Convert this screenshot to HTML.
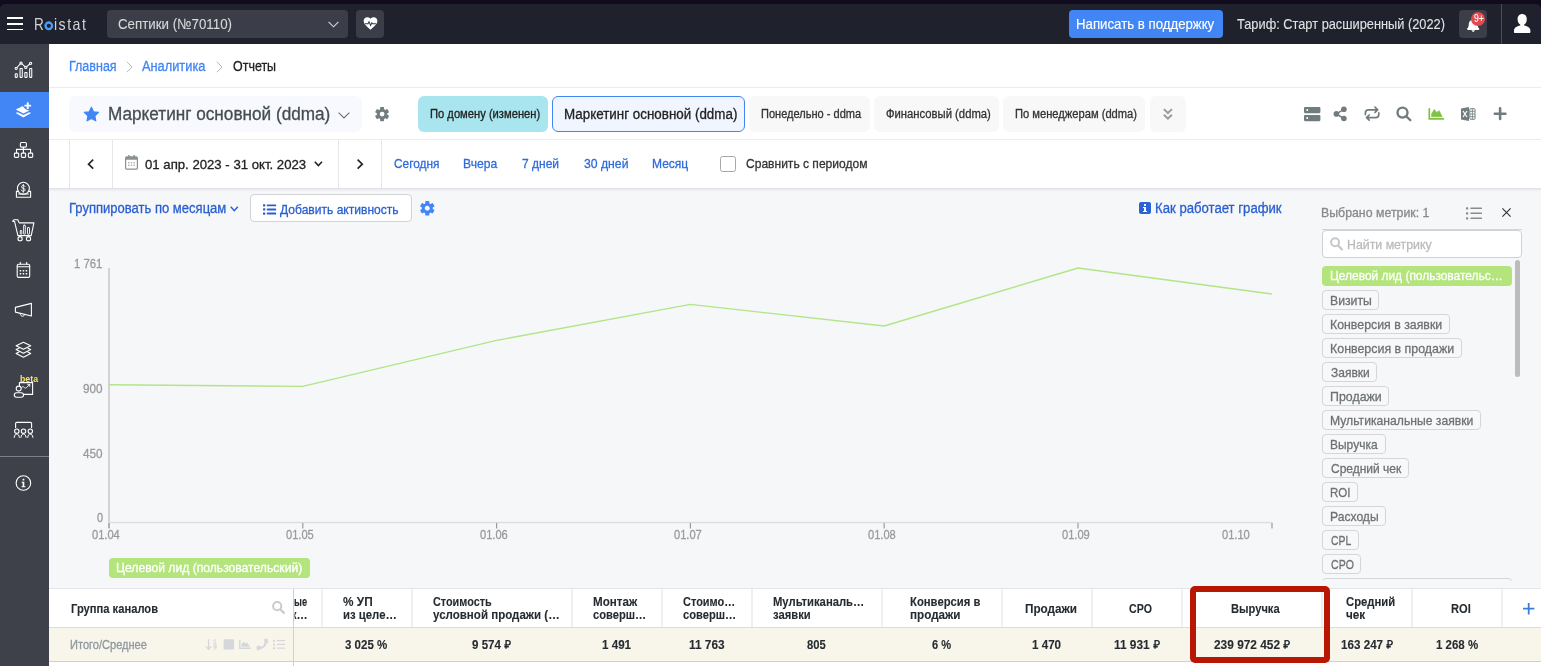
<!DOCTYPE html>
<html lang="ru">
<head>
<meta charset="utf-8">
<title>Roistat</title>
<style>
*{box-sizing:border-box;margin:0;padding:0}
html,body{width:1541px;height:666px;overflow:hidden;background:#fff;font-family:"Liberation Sans",sans-serif}
#page{position:relative;width:1541px;height:666px;overflow:hidden;background:#fff}
.a{position:absolute}
.t{position:absolute;white-space:pre;transform-origin:0 50%;font-family:"Liberation Sans",sans-serif;-webkit-text-stroke:.3px currentColor}
svg{position:absolute;overflow:visible}
.tag{position:absolute;left:1322px;height:20px;border:1px solid #d5d6d9;border-radius:4px;background:#f8f8f9}
.vs{position:absolute;top:589px;width:1.4px;height:38px;background:#eff0f1;margin-left:-.6px}
</style>
</head>
<body>
<div id="page">
<!-- top strip + header -->
<div class="a" style="left:0;top:0;width:1541px;height:10px;background:#100c1e"></div>
<div class="a" style="left:0;top:4px;width:1541px;height:40px;background:#1f212d;border-radius:5px 5px 0 0"></div>
<!-- hamburger -->
<div class="a" style="left:6.5px;top:17.3px;width:16px;height:1.4px;background:#fff"></div>
<div class="a" style="left:6.5px;top:23.2px;width:16px;height:1.4px;background:#fff"></div>
<div class="a" style="left:6.5px;top:28.8px;width:16px;height:1.4px;background:#fff"></div>
<!-- logo -->
<!-- project dropdown -->
<div class="a" style="left:107px;top:10px;width:241px;height:28px;background:#3b3e49;border-radius:4px"></div>
<svg style="left:327.700px;top:21px" width="11" height="7" viewBox="0 0 11 7"><path d="M.6.8 5.5 5.8 10.4.8" fill="none" stroke="#d8d8d8" stroke-width="1.1"/></svg>
<div class="a" style="left:356px;top:10px;width:28px;height:28px;background:#3b3e49;border-radius:4px"></div>
<svg style="left:362.600px;top:17.100px" width="15" height="12.800" viewBox="0 0 512 448"><path fill="#fff" d="M256 448l-30-28C96 302 16 236 16 140 16 66 72 12 144 12c42 0 82 20 112 52 30-32 70-52 112-52 72 0 128 54 128 128 0 96-80 162-210 280z"/><path fill="none" stroke="#3b3e49" stroke-width="36" d="M60 236h110l34-70 56 130 44-96 26 36h120"/></svg>
<!-- support button -->
<div class="a" style="left:1069px;top:10px;width:154px;height:28px;background:#4285f4;border-radius:4px"></div>
<!-- bell -->
<div class="a" style="left:1459px;top:10px;width:28px;height:28px;background:#3b3e49;border-radius:4px"></div>
<svg style="left:1466.6px;top:18.6px" width="12.4" height="12.8" viewBox="0 0 448 462"><path fill="#fff" d="M224 462c32 0 58-24 58-54H166c0 30 26 54 58 54zM440 340c-20-20-56-52-56-154 0-78-54-140-128-156V10c0-18-14-10-32-10s-32-8-32 10v20C118 46 64 108 64 186c0 102-36 134-56 154-6 6-8 14-8 22 0 16 12 32 32 32h384c20 0 32-16 32-32 0-8-2-16-8-22z"/></svg>
<div class="a" style="left:1471px;top:12px;width:14px;height:14px;border-radius:7px;background:#e5494d"></div>
<!-- divider + user -->
<div class="a" style="left:1501px;top:4px;width:1px;height:40px;background:#4a4d58"></div>
<svg style="left:1514px;top:14px" width="16.4" height="19" viewBox="0 0 164 190"><path fill="#fff" d="M82 0c28 0 46 22 46 52 0 22-10 44-26 54v10c36 8 62 24 62 50v14c0 6-4 10-10 10H10c-6 0-10-4-10-10v-14c0-26 26-42 62-50v-10C46 96 36 74 36 52 36 22 54 0 82 0z"/></svg>

<!-- sidebar -->
<div class="a" style="left:0;top:44px;width:49px;height:622px;background:#3e4149"></div>
<div class="a" style="left:0;top:92px;width:49px;height:36px;background:#4285f4"></div>
<div class="a" style="left:0;top:456px;width:49px;height:1px;background:#7d808a"></div>
<!--SIDEICONS_START--><svg style="left:0;top:0" width="60" height="666" viewBox="0 0 60 666" fill="none" stroke="#fff" stroke-width="1.100" stroke-linejoin="round" stroke-linecap="round">
<!-- 1 analytics -->
<g stroke-width="1.050"><rect x="15.250" y="73.650" width="2" height="3.700" rx=".3"/><rect x="20.050" y="68.550" width="2.200" height="8.800" rx=".3"/><rect x="24.850" y="72.450" width="2.200" height="4.900" rx=".3"/><rect x="29.650" y="68.550" width="2.100" height="8.800" rx=".3"/>
<path d="M17 67.500 20.300 63.800M21.900 63.800 25 66.700M26.700 66.700 29.800 64"/>
<circle cx="16.200" cy="68.300" r="1.100"/><circle cx="21" cy="63" r="1.100"/><circle cx="25.800" cy="67.400" r="1.100"/><circle cx="30.600" cy="63.300" r="1.100"/></g>
<!-- 2 layers plus (filled) -->
<g fill="#fff" stroke="none">
<path d="M15.7 109.5 22.9 106.1c1.2 2.6 3.4 4.2 6.6 4.5L23.4 113.5z"/>
<path d="M15.7 113.1 17.6 112.2 23.4 115.1 29.2 112.2 31.2 113.1 23.4 117.6z"/>
<rect x="26.8" y="102.2" width="1.9" height="6.8" rx=".5"/><rect x="24.35" y="104.65" width="6.8" height="1.9" rx=".5"/>
</g>
<!-- 3 sitemap -->
<rect x="20.4" y="142.5" width="6" height="4.6" rx="1"/>
<path d="M23.4 147.2V152.8M16.5 152.8V149.4H30.6V152.8"/>
<rect x="14.4" y="153.1" width="4.3" height="4.3" rx=".9"/><rect x="21.3" y="153.1" width="4.3" height="4.3" rx=".9"/><rect x="28.4" y="153.1" width="4.3" height="4.3" rx=".9"/>
<!-- 4 coin tray -->
<circle cx="23.4" cy="188.3" r="6"/>
<path d="M18.4 191.4H16.4V197.2H30.6V191.4H28.6M18.6 194H28.4" />
<path d="M25 186.6c-.3-.9-1-1.2-1.8-1.2-1 0-1.7.6-1.7 1.4 0 2 3.6 1 3.6 3 0 .9-.8 1.5-1.9 1.5-.9 0-1.7-.4-1.9-1.3M23.3 184.4v7.9" stroke-width=".9"/>
<!-- 5 cart -->
<path d="M12.6 221.3 14 219.7H17.8L19.2 222.9H33.9L31.2 235.6H17.9L14.6 221.6z" stroke-width="1.1"/>
<circle cx="20.1" cy="238.7" r="2.1" stroke-width="1.1"/><circle cx="28.5" cy="238.7" r="2.1" stroke-width="1.1"/>
<rect x="20.3" y="230.6" width="1.5" height="3.6" rx=".5" stroke-width=".9"/><rect x="23.6" y="225.2" width="1.7" height="9" rx=".5" stroke-width=".9"/><rect x="27.5" y="227.6" width="2" height="6.6" rx=".5" stroke-width=".9"/>
<!-- 6 calendar -->
<rect x="17.2" y="264.2" width="12.5" height="13.2" rx="1.4"/>
<path d="M17.2 266.7H29.7M20.3 262.4V264M26.7 262.4V264"/>
<g fill="#fff" stroke="none"><rect x="19.7" y="270" width="1.5" height="1.5"/><rect x="22.7" y="270" width="1.5" height="1.5"/><rect x="25.7" y="270" width="1.5" height="1.5"/><rect x="19.7" y="273" width="1.5" height="1.5"/><rect x="22.7" y="273" width="1.5" height="1.5"/><rect x="25.7" y="273" width="1.5" height="1.5"/></g>
<!-- 7 megaphone -->
<path d="M15.4 307.4 31.4 303.4V316L15.4 312.1z"/>
<path d="M20.2 313.4c0 1.8 1 2.8 2.3 2.8s2.2-.9 2.2-1.9" stroke-width="1"/>
<!-- 8 layers -->
<path d="M23.4 342.2 30.7 345.8 23.4 349.3 16.1 345.8z"/>
<path d="M18.9 348.2 16.1 349.6 23.4 353.2 30.7 349.6 27.9 348.2"/>
<path d="M18.9 352 16.1 353.5 23.4 357.2 30.7 353.5 27.9 352"/>
<!-- 9 presenter -->
<path d="M19.4 385.6V382.6H32.6V394.4H24.2"/>
<circle cx="18.7" cy="388.6" r="2.5"/>
<rect x="14.3" y="392.8" width="9.2" height="4.4" rx="2.2"/>
<path d="M21.6 387.6c1-1.2 1.8-1.2 2.6-.2s1.600 1 2.600-.2L29.600 384.600M27.800 384.400H29.800V386.400" stroke-width=".9"/>
<!-- 10 group -->
<path d="M15.6 427.600V423.600a1.200 1.200 0 0 1 1.200-1.200H30.400a1.200 1.200 0 0 1 1.200 1.200V427.600"/>
<circle cx="16.8" cy="431.200" r="2.200"/><circle cx="23.500" cy="431.200" r="2.200"/><circle cx="30.300" cy="431.200" r="2.200"/>
<path d="M14.200 437.400c.200-2.400 1.400-3.300 2.600-3.300s2.400.9 2.600 3.300M20.900 437.400c.200-2.400 1.400-3.300 2.600-3.300s2.400.9 2.600 3.300M27.700 437.400c.200-2.400 1.400-3.300 2.600-3.300s2.400.9 2.600 3.300" stroke-width="1"/>
<!-- info -->
<circle cx="23.400" cy="483" r="7.300" stroke-width="1.100"/>
<g fill="#fff" stroke="none"><rect x="22.600" y="478.800" width="1.700" height="1.700"/><path d="M21.600 481.700H24.300V486.200H25.400V487.200H21.500V486.200H22.600V482.700H21.600z"/></g>
</svg>
<!--SIDEICONS_END-->

<!-- breadcrumb row -->
<div class="a" style="left:49px;top:87px;width:1492px;height:1px;background:#ececec"></div>
<svg style="left:125.5px;top:60.5px" width="7" height="12" viewBox="0 0 7 12"><path d="M.8.8 6 6 .8 11.2" fill="none" stroke="#b9b9b9" stroke-width="1"/></svg>
<svg style="left:215.5px;top:60.5px" width="7" height="12" viewBox="0 0 7 12"><path d="M.8.8 6 6 .8 11.2" fill="none" stroke="#b9b9b9" stroke-width="1"/></svg>

<!-- title row -->
<div class="a" style="left:69px;top:96.400px;width:293px;height:35.600px;background:#f7f9fe;border-radius:7px"></div>
<svg style="left:82.600px;top:106.200px" width="16.800" height="16.200" viewBox="0 0 24 23"><path fill="#4285f4" stroke="#4285f4" stroke-width="1.6" stroke-linejoin="round" d="M12 1.6l3.1 6.6 7.1.9-5.2 5 1.3 7.1L12 17.7 5.7 21.2 7 14.1l-5.2-5 7.1-.9z"/></svg>
<svg style="left:337.5px;top:111.6px" width="12" height="7" viewBox="0 0 12 7"><path d="M.6.7 6 6 11.4.7" fill="none" stroke="#6b7375" stroke-width="1.1"/></svg>
<!--G1S--><svg style="left:373.95px;top:105.80px" width="16.2" height="16.2" viewBox="-8.10 -8.10 16.20 16.20"><g fill="#737e81"><circle r="5.25"/><rect x="-1.99" y="-7.10" width="3.98" height="4.26" rx=".7" transform="rotate(0)"/><rect x="-1.99" y="-7.10" width="3.98" height="4.26" rx=".7" transform="rotate(60)"/><rect x="-1.99" y="-7.10" width="3.98" height="4.26" rx=".7" transform="rotate(120)"/><rect x="-1.99" y="-7.10" width="3.98" height="4.26" rx=".7" transform="rotate(180)"/><rect x="-1.99" y="-7.10" width="3.98" height="4.26" rx=".7" transform="rotate(240)"/><rect x="-1.99" y="-7.10" width="3.98" height="4.26" rx=".7" transform="rotate(300)"/></g><circle r="2.40" fill="#fff"/></svg><!--G1E-->
<div class="a" style="left:418px;top:96px;width:130px;height:36px;background:#a9e5ee;border-radius:6px"></div>
<div class="a" style="left:552px;top:96px;width:193px;height:36px;background:#f0f5ff;border:1px solid #4285f4;border-radius:6px"></div>
<div class="a" style="left:749px;top:96px;width:121px;height:36px;background:#f8f8f8;border-radius:6px"></div>
<div class="a" style="left:874px;top:96px;width:125px;height:36px;background:#f8f8f8;border-radius:6px"></div>
<div class="a" style="left:1003px;top:96px;width:142px;height:36px;background:#f8f8f8;border-radius:6px"></div>
<div class="a" style="left:1150px;top:96px;width:36px;height:36px;background:#f8f8f8;border-radius:6px"></div>
<svg style="left:1162.8px;top:107.8px" width="9.8" height="12.4" viewBox="0 0 10 12.4"><path d="M.9 1 5 5 9.1 1M.9 6.8 5 10.8 9.1 6.8" fill="none" stroke="#979d9f" stroke-width="2"/></svg>
<!--TIS--><svg style="left:0;top:0" width="1541" height="140" viewBox="0 0 1541 140">
<g fill="#717c7f"><rect x="1304" y="107" width="16.400" height="6.200" rx="1.100"/><rect x="1304" y="115" width="16.400" height="6.200" rx="1.100"/></g>
<circle cx="1307.200" cy="110.100" r="1" fill="#fff"/><circle cx="1307.200" cy="118.100" r="1" fill="#fff"/>
<g fill="#717c7f"><circle cx="1343.900" cy="109.300" r="2.800"/><circle cx="1336.400" cy="113.900" r="2.800"/><circle cx="1343.900" cy="118.500" r="2.800"/></g>
<path d="M1343.900 109.300 1336.400 113.900 1343.900 118.500" fill="none" stroke="#717c7f" stroke-width="1.500"/>
<g fill="none" stroke="#717c7f" stroke-width="1.700" stroke-linecap="round" stroke-linejoin="round">
<path d="M1365.400 114.600V113a3.200 3.200 0 0 1 3.200-3.200H1377.200M1375 107.200 1377.700 109.800 1375 112.400"/>
<path d="M1378.800 112.800V114.400a3.200 3.200 0 0 1-3.200 3.200H1367M1369.200 115 1366.500 117.600 1369.200 120.200"/>
</g>
<circle cx="1402.500" cy="112.600" r="5" fill="none" stroke="#717c7f" stroke-width="2.400"/>
<path d="M1406.400 116.500 1410.300 120.200" stroke="#717c7f" stroke-width="2.300" stroke-linecap="round"/>
<path d="M1429.300 108.800V118.900H1443.400" fill="none" stroke="#7dc242" stroke-width="1.700" stroke-linecap="round" stroke-linejoin="round"/>
<path d="M1431.600 116.800V113.800L1434.300 109.400 1436.700 112.400 1439.200 110.700 1442.200 116.800z" fill="#7dc242" stroke="#7dc242" stroke-width=".6" stroke-linejoin="round"/>
<path d="M1461 108.500 1469 107V120.900L1461 119.500z" fill="#717c7f"/>
<path d="M1463 111 1467 117M1467 111 1463 117" stroke="#fff" stroke-width="1.200"/>
<rect x="1469.800" y="108.700" width="5.200" height="10.600" rx=".8" fill="#fff" stroke="#717c7f" stroke-width="1"/>
<path d="M1470 111.300H1475M1470 114H1475M1470 116.700H1475M1472.400 109V119" stroke="#717c7f" stroke-width=".8"/>
<path d="M1500.100 108.400V119M1494.800 113.700H1505.400" stroke="#717c7f" stroke-width="2.600" stroke-linecap="round"/>
</svg><!--TIE-->
<div class="a" style="left:49px;top:139px;width:1492px;height:1px;background:#ececec"></div>

<!-- date row -->
<div class="a" style="left:69px;top:140px;width:1px;height:48px;background:#e6e6e6"></div>
<div class="a" style="left:112px;top:140px;width:1px;height:48px;background:#e6e6e6"></div>
<div class="a" style="left:338px;top:140px;width:1px;height:48px;background:#e6e6e6"></div>
<div class="a" style="left:381px;top:140px;width:1px;height:48px;background:#e6e6e6"></div>
<svg style="left:87px;top:158.800px" width="8" height="11" viewBox="0 0 8 11"><path d="M6.200.7 1.500 5.200 6.200 9.700" fill="none" stroke="#1d2226" stroke-width="1.600"/></svg>
<svg style="left:356.400px;top:158.800px" width="8" height="11" viewBox="0 0 8 11"><path d="M1.600.7 6.300 5.200 1.600 9.700" fill="none" stroke="#1d2226" stroke-width="1.600"/></svg>
<svg style="left:314px;top:160.5px" width="9" height="6" viewBox="0 0 9 6"><path d="M.8.8 4.4 4.6 8 .8" fill="none" stroke="#1d2226" stroke-width="1.5"/></svg>
<!-- calendar icon -->
<svg style="left:125px;top:155.4px" width="13" height="14.8" viewBox="0 0 13 14.8"><rect x=".6" y="1.9" width="11.8" height="12.3" rx="1.3" fill="#fff" stroke="#8a9294" stroke-width="1.2"/><path d="M.6 3.2a1.3 1.3 0 0 1 1.3-1.3h9.2a1.3 1.3 0 0 1 1.3 1.3v1.5H.6z" fill="#8a9294"/><rect x="3.2" y="0" width="1.4" height="2.6" fill="#8a9294"/><rect x="8.4" y="0" width="1.4" height="2.6" fill="#8a9294"/><g fill="#b5babb"><rect x="3" y="7" width="1.6" height="1.4"/><rect x="5.7" y="7" width="1.6" height="1.4"/><rect x="8.4" y="7" width="1.6" height="1.4"/><rect x="3" y="9.6" width="1.6" height="1.4"/><rect x="5.7" y="9.6" width="1.6" height="1.4"/><rect x="8.4" y="9.6" width="1.6" height="1.4"/></g></svg>
<div class="a" style="left:720px;top:156px;width:16px;height:16px;border:1px solid #a8a8a8;border-radius:2.5px;background:#fff"></div>

<!-- chart area -->
<div class="a" style="left:49px;top:188px;width:1492px;height:400px;background:#f6f7f9"></div>
<div class="a" style="left:49px;top:188px;width:1492px;height:4px;background:linear-gradient(#dcdee2,#eceef1 45%,#f6f7f9)"></div>
<svg style="left:230px;top:205.600px" width="8.600" height="6.400" viewBox="0 0 8 6"><path d="M.7.8 4 4.4 7.3.8" fill="none" stroke="#2a5fd0" stroke-width="1.4"/></svg>
<div class="a" style="left:250px;top:194px;width:162px;height:28px;background:#fff;border:1px solid #d3d3d6;border-radius:4px"></div>
<svg style="left:263px;top:203.500px" width="13.200" height="11" viewBox="0 0 13.200 11"><g fill="#2a5fd0"><rect x="0" y=".2" width="2.300" height="2.300" rx=".4"/><rect x="0" y="4.300" width="2.300" height="2.300" rx=".4"/><rect x="0" y="8.400" width="2.300" height="2.300" rx=".4"/><rect x="3.800" y=".4" width="9.400" height="1.900" rx=".6"/><rect x="3.800" y="4.500" width="9.400" height="1.900" rx=".6"/><rect x="3.800" y="8.600" width="9.400" height="1.900" rx=".6"/></g></svg>
<!--G2S--><svg style="left:419.100px;top:199.600px" width="16.6" height="16.6" viewBox="-8.30 -8.30 16.60 16.60"><g fill="#4285f4"><circle r="5.40"/><rect x="-2.04" y="-7.30" width="4.09" height="4.38" rx=".7" transform="rotate(0)"/><rect x="-2.04" y="-7.30" width="4.09" height="4.38" rx=".7" transform="rotate(60)"/><rect x="-2.04" y="-7.30" width="4.09" height="4.38" rx=".7" transform="rotate(120)"/><rect x="-2.04" y="-7.30" width="4.09" height="4.38" rx=".7" transform="rotate(180)"/><rect x="-2.04" y="-7.30" width="4.09" height="4.38" rx=".7" transform="rotate(240)"/><rect x="-2.04" y="-7.30" width="4.09" height="4.38" rx=".7" transform="rotate(300)"/></g><circle r="2.50" fill="#f6f7f9"/></svg><!--G2E-->
<!-- info icon -->
<div class="a" style="left:1138.500px;top:201.600px;width:12.200px;height:12.300px;border-radius:2px;background:#2b62d6"></div>
<div class="a" style="left:1143.600px;top:203.900px;width:2.100px;height:2.100px;background:#fff"></div>
<div class="a" style="left:1143.600px;top:207px;width:2.100px;height:4.800px;background:#fff"></div>
<div class="a" style="left:1142.500px;top:207px;width:2px;height:1.200px;background:#fff"></div>
<div class="a" style="left:1142.500px;top:210.600px;width:4.300px;height:1.300px;background:#fff"></div>

<!-- chart -->
<svg style="left:0;top:0" width="1541" height="666" viewBox="0 0 1541 666">
<path d="M109 268V528" stroke="#c9cacc" stroke-width="1.6" fill="none"/>
<path d="M108.4 522.5H1272.6" stroke="#dcdddf" stroke-width="1.4" fill="none"/>
<g stroke="#9b9b9b" stroke-width="1.2"><path d="M109 523v5.5M302.8 523v5.5M496.6 523v5.5M690.4 523v5.5M884.2 523v5.5M1078 523v5.5M1272 523v5.5"/></g>
<polyline points="109,384.8 302.8,386.4 496.6,340.4 690.4,304.4 884.2,326 1078,268 1271.8,294" fill="none" stroke="#b2e587" stroke-width="1.400" stroke-linejoin="round"/>
</svg>
<div class="a" style="left:109px;top:558px;width:201.200px;height:20px;background:#b3e57c;border-radius:4px"></div>

<!-- right metrics panel -->
<svg style="left:1466.4px;top:207px" width="16" height="13" viewBox="0 0 16 13"><g fill="#8b8b8b"><rect x="0" y=".2" width="2.2" height="2.2" rx=".5"/><rect x="0" y="5.2" width="2.2" height="2.2" rx=".5"/><rect x="0" y="10.2" width="2.2" height="2.2" rx=".5"/><rect x="4.4" y=".6" width="11.6" height="1.4" rx=".6"/><rect x="4.4" y="5.6" width="11.6" height="1.4" rx=".6"/><rect x="4.4" y="10.6" width="11.6" height="1.4" rx=".6"/></g></svg>
<svg style="left:1501.6px;top:208px" width="9" height="9" viewBox="0 0 9 9"><path d="M.4.4 8.6 8.6M8.6.4.4 8.6" stroke="#2b2f33" stroke-width="1.1" fill="none"/></svg>
<div class="a" style="left:1322px;top:229px;width:200px;height:1px;background:#d3d5d8"></div>
<div class="a" style="left:1322px;top:230px;width:200px;height:28px;background:#fff;border:1px solid #cfd1d5;border-radius:4px"></div>
<svg style="left:1330.100px;top:237.300px" width="13.200" height="13.600" viewBox="0 0 13.200 13.600"><circle cx="5.100" cy="5.300" r="4" fill="none" stroke="#c6c8cb" stroke-width="2"/><path d="M8.300 8.700 12 12.500" stroke="#c6c8cb" stroke-width="2.300" stroke-linecap="round"/></svg>
<div class="a" style="left:1514.6px;top:260px;width:5.4px;height:117px;background:#bcbcbc;border-radius:3px"></div>
<div class="a" style="left:1322px;top:266px;width:190.4px;height:20px;background:#b3e57c;border-radius:4px"></div>
<div class="tag" style="top:290px;width:57.4px"></div>
<div class="tag" style="top:314px;width:127.5px"></div>
<div class="tag" style="top:338px;width:139.5px"></div>
<div class="tag" style="top:362px;width:55px"></div>
<div class="tag" style="top:386px;width:67px"></div>
<div class="tag" style="top:410px;width:158.7px"></div>
<div class="tag" style="top:434px;width:63.8px"></div>
<div class="tag" style="top:458px;width:87px"></div>
<div class="tag" style="top:482px;width:35.7px"></div>
<div class="tag" style="top:506px;width:63.8px"></div>
<div class="tag" style="top:530px;width:37.3px"></div>
<div class="tag" style="top:554px;width:39.2px"></div>
<div class="a" style="left:1322px;top:578.4px;width:190px;height:3px;overflow:hidden"><div class="tag" style="left:0;top:0;width:190px"></div></div>

<!-- table -->
<div class="a" style="left:49px;top:588px;width:1492px;height:78px;background:#fff"></div>
<div class="a" style="left:49px;top:588px;width:1492px;height:1px;background:#e6e6e8"></div>
<div class="a" style="left:49px;top:627px;width:1492px;height:1px;background:#dcdcdc"></div>
<div class="a" style="left:49px;top:628px;width:1492px;height:33px;background:#f8f6ea"></div>
<div class="a" style="left:49px;top:661px;width:1492px;height:1.4px;background:#cfd0d0"></div>
<div class="a" style="left:293px;top:589px;width:1px;height:77px;background:#cdd0d4"></div>
<div class="vs" style="left:322px"></div><div class="vs" style="left:412px"></div><div class="vs" style="left:572px"></div><div class="vs" style="left:662px"></div><div class="vs" style="left:752px"></div><div class="vs" style="left:882px"></div><div class="vs" style="left:1002px"></div><div class="vs" style="left:1092px"></div><div class="vs" style="left:1182px"></div><div class="vs" style="left:1322px"></div><div class="vs" style="left:1412px"></div><div class="vs" style="left:1502px"></div>
<svg style="left:272px;top:601.100px" width="12.800" height="12.800" viewBox="0 0 12.800 12.800"><circle cx="5.200" cy="5.200" r="4.100" fill="none" stroke="#c8cccf" stroke-width="2"/><path d="M8.400 8.500 11.900 11.800" stroke="#c8cccf" stroke-width="2.300" stroke-linecap="round"/></svg>
<!--RIS--><svg style="left:0;top:630px" width="300" height="30" viewBox="0 630 300 30">
<g fill="none" stroke="#d5d7da" stroke-width="1.300" stroke-linecap="round" stroke-linejoin="round"><path d="M208.600 640V649.200M206.400 647 208.600 649.400 210.800 647"/><path d="M213.600 640.400 215 639.400V643.600M213.600 643.700H216.400" stroke-width="1"/><circle cx="215" cy="646.400" r="1.350" stroke-width="1"/><path d="M216.300 646.600C216.300 648.200 215.600 649.200 214.200 649.500" stroke-width="1"/></g>
<g fill="#d5d7da"><rect x="223.600" y="639.200" width="10.400" height="10.400" rx="1.200"/>
<path d="M239.100 640H240.500V647.600H250.800V648.900H239.100z"/><path d="M241.400 646.800V644.600L243.500 641.400 245.500 643.600 247.400 642.400 249.800 646.800z"/>
<rect x="273" y="639.700" width="2" height="2" rx=".3"/><rect x="273" y="643.450" width="2" height="2" rx=".3"/><rect x="273" y="647.200" width="2" height="2" rx=".3"/><rect x="276.800" y="640" width="8.400" height="1.350" rx=".5"/><rect x="276.800" y="643.750" width="8.400" height="1.350" rx=".5"/><rect x="276.800" y="647.500" width="8.400" height="1.350" rx=".5"/></g>
<path d="M265.700 640.600C266.400 645.400 263.400 648 258.700 648.300" fill="none" stroke="#d5d7da" stroke-width="2.100" stroke-linecap="round"/>
<path d="M264.400 639.400 267.400 639.200 268 642.400 265.400 642.800zM256.800 646.400 259.800 645.800 261 648.600 257.400 650.200z" fill="#d5d7da" stroke="#d5d7da" stroke-width=".8" stroke-linejoin="round"/>
</svg><!--RIE-->
<svg style="left:1522.6px;top:603.2px" width="11.4" height="11.4" viewBox="0 0 11.4 11.4"><path d="M5.7 0v11.4M0 5.7h11.4" stroke="#3a7fd5" stroke-width="1.8" fill="none"/></svg>

<div class="a" id="tx" style="left:0;top:0;width:1541px;height:666px;will-change:transform">
<span class="t" style="left:34.3px;top:16.3px;font-size:16.5px;line-height:16.5px;color:#d2d2d4;-webkit-text-stroke:0;transform:scaleX(.82)">R</span>
<span class="t" style="left:54.3px;top:16.3px;font-size:16.5px;line-height:16.5px;color:#d2d2d4;-webkit-text-stroke:0;letter-spacing:1.7px;transform:scaleX(.86)">istat</span>
<svg style="left:43.6px;top:21.4px" width="9.6" height="9.6" viewBox="0 0 9.6 9.6"><circle cx="4.8" cy="4.8" r="3.3" fill="none" stroke="#4a9df6" stroke-width="2.3"/></svg>
<svg style="left:504.4px;top:640.2px" width="7" height="8.800" viewBox="0 0 7 8.800"><path d="M2.100 8.800V.700H4.100a2.100 2.100 0 0 1 0 4.200H.3M.3 6.800H4.800" fill="none" stroke="#1f262b" stroke-width="1.350"/></svg>
<svg style="left:1153.0px;top:640.2px" width="7" height="8.800" viewBox="0 0 7 8.800"><path d="M2.100 8.800V.700H4.100a2.100 2.100 0 0 1 0 4.200H.3M.3 6.800H4.800" fill="none" stroke="#1f262b" stroke-width="1.350"/></svg>
<svg style="left:1283.0px;top:640.2px" width="7" height="8.800" viewBox="0 0 7 8.800"><path d="M2.100 8.800V.700H4.100a2.100 2.100 0 0 1 0 4.200H.3M.3 6.800H4.800" fill="none" stroke="#1f262b" stroke-width="1.350"/></svg>
<svg style="left:1386.0px;top:640.2px" width="7" height="8.800" viewBox="0 0 7 8.800"><path d="M2.100 8.800V.700H4.100a2.100 2.100 0 0 1 0 4.200H.3M.3 6.800H4.800" fill="none" stroke="#1f262b" stroke-width="1.350"/></svg>
<span class="t" style="left:118.00px;top:16.20px;font-size:15px;line-height:15px;color:#d8d8da;transform:scaleX(0.8883);-webkit-text-stroke:.1px currentColor;">Септики (№70110)</span>
<span class="t" style="left:1076.12px;top:16.10px;font-size:15px;line-height:15px;color:#ffffff;transform:scaleX(0.8818);-webkit-text-stroke:.15px currentColor;">Написать в поддержку</span>
<span class="t" style="left:1237.00px;top:16.20px;font-size:15px;line-height:15px;color:#e2e2e4;transform:scaleX(0.8535);-webkit-text-stroke:.1px currentColor;">Тариф: Старт расширенный (2022)</span>
<span class="t" style="left:1473.60px;top:14.40px;font-size:10px;line-height:10px;color:#ffffff;transform:scaleX(0.8649);-webkit-text-stroke:.1px currentColor;">9+</span>
<span class="t" style="left:68.51px;top:59.00px;font-size:14px;line-height:14px;color:#4285f4;transform:scaleX(0.8935);">Главная</span>
<span class="t" style="left:142.00px;top:59.00px;font-size:14px;line-height:14px;color:#4285f4;transform:scaleX(0.9150);">Аналитика</span>
<span class="t" style="left:232.60px;top:59.00px;font-size:14px;line-height:14px;color:#222222;transform:scaleX(0.8897);">Отчеты</span>
<span class="t" style="left:107.65px;top:105.30px;font-size:18px;line-height:18px;color:#454d4f;transform:scaleX(0.9538);">Маркетинг основной (ddma)</span>
<span class="t" style="left:430.40px;top:108.40px;font-size:12px;line-height:12px;color:#222;transform:scaleX(0.9320);">По домену (изменен)</span>
<span class="t" style="left:563.64px;top:107.20px;font-size:14px;line-height:14px;color:#222;transform:scaleX(0.9565);">Маркетинг основной (ddma)</span>
<span class="t" style="left:760.60px;top:108.40px;font-size:12px;line-height:12px;color:#333;transform:scaleX(0.9196);">Понедельно - ddma</span>
<span class="t" style="left:885.60px;top:108.40px;font-size:12px;line-height:12px;color:#333;transform:scaleX(0.9390);">Финансовый (ddma)</span>
<span class="t" style="left:1015.00px;top:108.40px;font-size:12px;line-height:12px;color:#333;transform:scaleX(0.9296);">По менеджерам (ddma)</span>
<span class="t" style="left:145.40px;top:158.00px;font-size:13.5px;line-height:13.5px;color:#222;transform:scaleX(0.9753);">01 апр. 2023 - 31 окт. 2023</span>
<span class="t" style="left:394.20px;top:157.00px;font-size:13.5px;line-height:13.5px;color:#2f6bdc;transform:scaleX(0.8789);">Сегодня</span>
<span class="t" style="left:462.70px;top:157.00px;font-size:13.5px;line-height:13.5px;color:#2f6bdc;transform:scaleX(0.8988);">Вчера</span>
<span class="t" style="left:522.00px;top:157.00px;font-size:13.5px;line-height:13.5px;color:#2f6bdc;transform:scaleX(0.8905);">7 дней</span>
<span class="t" style="left:583.60px;top:157.00px;font-size:13.5px;line-height:13.5px;color:#2f6bdc;transform:scaleX(0.9052);">30 дней</span>
<span class="t" style="left:651.51px;top:157.00px;font-size:13.5px;line-height:13.5px;color:#2f6bdc;transform:scaleX(0.8908);">Месяц</span>
<span class="t" style="left:746.40px;top:157.00px;font-size:13.5px;line-height:13.5px;color:#333;transform:scaleX(0.8921);">Сравнить с периодом</span>
<span class="t" style="left:68.87px;top:201.00px;font-size:14px;line-height:14px;color:#2a5fd0;transform:scaleX(0.9308);">Группировать по месяцам</span>
<span class="t" style="left:280.20px;top:203.00px;font-size:13px;line-height:13px;color:#2a5fd0;transform:scaleX(0.9273);">Добавить активность</span>
<span class="t" style="left:1154.86px;top:201.20px;font-size:14px;line-height:14px;color:#2a5fd0;transform:scaleX(0.9391);">Как работает график</span>
<span class="t" style="left:74.00px;top:258.00px;font-size:12px;line-height:12px;color:#9a9a9a;transform:scaleX(0.9422);">1 761</span>
<span class="t" style="left:82.70px;top:382.50px;font-size:12px;line-height:12px;color:#9a9a9a;transform:scaleX(0.9780);">900</span>
<span class="t" style="left:82.70px;top:448.30px;font-size:12px;line-height:12px;color:#9a9a9a;transform:scaleX(0.9780);">450</span>
<span class="t" style="left:96.60px;top:512.00px;font-size:12px;line-height:12px;color:#9a9a9a;transform:scaleX(0.9143);">0</span>
<span class="t" style="left:92.45px;top:529.00px;font-size:12px;line-height:12px;color:#9a9a9a;transform:scaleX(0.9257);">01.04</span>
<span class="t" style="left:286.35px;top:529.00px;font-size:12px;line-height:12px;color:#9a9a9a;transform:scaleX(0.9257);">01.05</span>
<span class="t" style="left:480.15px;top:529.00px;font-size:12px;line-height:12px;color:#9a9a9a;transform:scaleX(0.9257);">01.06</span>
<span class="t" style="left:673.95px;top:529.00px;font-size:12px;line-height:12px;color:#9a9a9a;transform:scaleX(0.9257);">01.07</span>
<span class="t" style="left:867.75px;top:529.00px;font-size:12px;line-height:12px;color:#9a9a9a;transform:scaleX(0.9257);">01.08</span>
<span class="t" style="left:1061.55px;top:529.00px;font-size:12px;line-height:12px;color:#9a9a9a;transform:scaleX(0.9257);">01.09</span>
<span class="t" style="left:1222.45px;top:529.00px;font-size:12px;line-height:12px;color:#9a9a9a;transform:scaleX(0.9257);">01.10</span>
<span class="t" style="left:116.47px;top:561.40px;font-size:13px;line-height:13px;color:#fff;transform:scaleX(0.9332);">Целевой лид (пользовательский)</span>
<span class="t" style="left:1321.49px;top:206.00px;font-size:13.5px;line-height:13.5px;color:#888;transform:scaleX(0.9134);">Выбрано метрик: 1</span>
<span class="t" style="left:1346.69px;top:238.00px;font-size:13.5px;line-height:13.5px;color:#bbbbbb;transform:scaleX(0.9140);">Найти метрику</span>
<span class="t" style="left:1329.72px;top:269.40px;font-size:13.5px;line-height:13.5px;color:#fff;transform:scaleX(0.8840);">Целевой лид (пользовательс…</span>
<span class="t" style="left:1329.79px;top:293.50px;font-size:13.5px;line-height:13.5px;color:#6b7275;transform:scaleX(0.9064);">Визиты</span>
<span class="t" style="left:1329.79px;top:317.50px;font-size:13.5px;line-height:13.5px;color:#6b7275;transform:scaleX(0.9140);">Конверсия в заявки</span>
<span class="t" style="left:1329.78px;top:341.50px;font-size:13.5px;line-height:13.5px;color:#6b7275;transform:scaleX(0.9193);">Конверсия в продажи</span>
<span class="t" style="left:1330.70px;top:365.50px;font-size:13.5px;line-height:13.5px;color:#6b7275;transform:scaleX(0.8897);">Заявки</span>
<span class="t" style="left:1329.78px;top:389.50px;font-size:13.5px;line-height:13.5px;color:#6b7275;transform:scaleX(0.9172);">Продажи</span>
<span class="t" style="left:1329.80px;top:413.50px;font-size:13.5px;line-height:13.5px;color:#6b7275;transform:scaleX(0.9015);">Мультиканальные заявки</span>
<span class="t" style="left:1329.81px;top:437.50px;font-size:13.5px;line-height:13.5px;color:#6b7275;transform:scaleX(0.8878);">Выручка</span>
<span class="t" style="left:1330.70px;top:461.50px;font-size:13.5px;line-height:13.5px;color:#6b7275;transform:scaleX(0.8879);">Средний чек</span>
<span class="t" style="left:1329.85px;top:485.50px;font-size:13.5px;line-height:13.5px;color:#6b7275;transform:scaleX(0.8539);">ROI</span>
<span class="t" style="left:1329.80px;top:509.50px;font-size:13.5px;line-height:13.5px;color:#6b7275;transform:scaleX(0.8971);">Расходы</span>
<span class="t" style="left:1330.70px;top:533.50px;font-size:13.5px;line-height:13.5px;color:#6b7275;transform:scaleX(0.7700);">CPL</span>
<span class="t" style="left:1330.70px;top:557.50px;font-size:13.5px;line-height:13.5px;color:#6b7275;transform:scaleX(0.7825);">CPO</span>
<span class="t" style="left:70.50px;top:601.60px;font-size:13.5px;line-height:13.5px;color:#252b30;transform:scaleX(0.8278);font-weight:700;-webkit-text-stroke:.1px currentColor;">Группа каналов</span>
<span class="t" style="left:293.90px;top:594.60px;font-size:13.5px;line-height:13.5px;color:#252b30;transform:scaleX(0.6862);font-weight:700;-webkit-text-stroke:.1px currentColor;">ые</span>
<span class="t" style="left:290.60px;top:608.40px;font-size:13.5px;line-height:13.5px;color:#252b30;transform:scaleX(0.8210);font-weight:700;-webkit-text-stroke:.1px currentColor;clip-path:inset(0 0 0 4.200px);">к…</span>
<span class="t" style="left:343.00px;top:594.60px;font-size:13.5px;line-height:13.5px;color:#252b30;transform:scaleX(0.8747);font-weight:700;-webkit-text-stroke:.1px currentColor;">% УП</span>
<span class="t" style="left:343.00px;top:608.40px;font-size:13.5px;line-height:13.5px;color:#252b30;transform:scaleX(0.8420);font-weight:700;-webkit-text-stroke:.1px currentColor;">из целе…</span>
<span class="t" style="left:432.60px;top:594.60px;font-size:13.5px;line-height:13.5px;color:#252b30;transform:scaleX(0.8030);font-weight:700;-webkit-text-stroke:.1px currentColor;">Стоимость</span>
<span class="t" style="left:432.60px;top:608.40px;font-size:13.5px;line-height:13.5px;color:#252b30;transform:scaleX(0.8546);font-weight:700;-webkit-text-stroke:.1px currentColor;">условной продажи (…</span>
<span class="t" style="left:593.00px;top:594.60px;font-size:13.5px;line-height:13.5px;color:#252b30;transform:scaleX(0.8616);font-weight:700;-webkit-text-stroke:.1px currentColor;">Монтаж</span>
<span class="t" style="left:593.00px;top:608.40px;font-size:13.5px;line-height:13.5px;color:#252b30;transform:scaleX(0.8269);font-weight:700;-webkit-text-stroke:.1px currentColor;">соверш…</span>
<span class="t" style="left:683.00px;top:594.60px;font-size:13.5px;line-height:13.5px;color:#252b30;transform:scaleX(0.8123);font-weight:700;-webkit-text-stroke:.1px currentColor;">Стоимо…</span>
<span class="t" style="left:683.00px;top:608.40px;font-size:13.5px;line-height:13.5px;color:#252b30;transform:scaleX(0.8269);font-weight:700;-webkit-text-stroke:.1px currentColor;">соверш…</span>
<span class="t" style="left:773.00px;top:594.60px;font-size:13.5px;line-height:13.5px;color:#252b30;transform:scaleX(0.8335);font-weight:700;-webkit-text-stroke:.1px currentColor;">Мультиканаль…</span>
<span class="t" style="left:773.00px;top:608.40px;font-size:13.5px;line-height:13.5px;color:#252b30;transform:scaleX(0.8316);font-weight:700;-webkit-text-stroke:.1px currentColor;">заявки</span>
<span class="t" style="left:910.40px;top:594.60px;font-size:13.5px;line-height:13.5px;color:#252b30;transform:scaleX(0.8362);font-weight:700;-webkit-text-stroke:.1px currentColor;">Конверсия в</span>
<span class="t" style="left:910.40px;top:608.40px;font-size:13.5px;line-height:13.5px;color:#252b30;transform:scaleX(0.8638);font-weight:700;-webkit-text-stroke:.1px currentColor;">продажи</span>
<span class="t" style="left:1024.60px;top:601.60px;font-size:13.5px;line-height:13.5px;color:#252b30;transform:scaleX(0.8682);font-weight:700;-webkit-text-stroke:.1px currentColor;">Продажи</span>
<span class="t" style="left:1129.40px;top:601.60px;font-size:13.5px;line-height:13.5px;color:#252b30;transform:scaleX(0.7860);font-weight:700;-webkit-text-stroke:.1px currentColor;">CPO</span>
<span class="t" style="left:1231.00px;top:601.60px;font-size:13.5px;line-height:13.5px;color:#252b30;transform:scaleX(0.8242);font-weight:700;-webkit-text-stroke:.1px currentColor;">Выручка</span>
<span class="t" style="left:1346.00px;top:594.60px;font-size:13.5px;line-height:13.5px;color:#252b30;transform:scaleX(0.8372);font-weight:700;-webkit-text-stroke:.1px currentColor;">Средний</span>
<span class="t" style="left:1346.00px;top:608.40px;font-size:13.5px;line-height:13.5px;color:#252b30;transform:scaleX(0.8682);font-weight:700;-webkit-text-stroke:.1px currentColor;">чек</span>
<span class="t" style="left:1450.90px;top:601.60px;font-size:13.5px;line-height:13.5px;color:#252b30;transform:scaleX(0.8215);font-weight:700;-webkit-text-stroke:.1px currentColor;">ROI</span>
<span class="t" style="left:69.80px;top:639.00px;font-size:12px;line-height:12px;color:#8f97a0;transform:scaleX(0.9209);">Итого/Среднее</span>
<span class="t" style="left:345.40px;top:639.00px;font-size:12px;line-height:12px;color:#252b30;transform:scaleX(0.9603);font-weight:700;-webkit-text-stroke:.1px currentColor;">3 025 %</span>
<span class="t" style="left:472.40px;top:639.00px;font-size:12px;line-height:12px;color:#252b30;transform:scaleX(0.9619);font-weight:700;-webkit-text-stroke:.1px currentColor;">9 574</span>
<span class="t" style="left:601.60px;top:639.00px;font-size:12px;line-height:12px;color:#252b30;transform:scaleX(0.9685);font-weight:700;-webkit-text-stroke:.1px currentColor;">1 491</span>
<span class="t" style="left:688.60px;top:639.00px;font-size:12px;line-height:12px;color:#252b30;transform:scaleX(0.9899);font-weight:700;-webkit-text-stroke:.1px currentColor;">11 763</span>
<span class="t" style="left:807.00px;top:639.00px;font-size:12px;line-height:12px;color:#252b30;transform:scaleX(0.9338);font-weight:700;-webkit-text-stroke:.1px currentColor;">805</span>
<span class="t" style="left:932.00px;top:639.00px;font-size:12px;line-height:12px;color:#252b30;transform:scaleX(0.9235);font-weight:700;-webkit-text-stroke:.1px currentColor;">6 %</span>
<span class="t" style="left:1032.00px;top:639.00px;font-size:12px;line-height:12px;color:#252b30;transform:scaleX(0.9685);font-weight:700;-webkit-text-stroke:.1px currentColor;">1 470</span>
<span class="t" style="left:1114.00px;top:639.00px;font-size:12px;line-height:12px;color:#252b30;transform:scaleX(0.9899);font-weight:700;-webkit-text-stroke:.1px currentColor;">11 931</span>
<span class="t" style="left:1213.60px;top:639.00px;font-size:12px;line-height:12px;color:#252b30;transform:scaleX(0.9902);font-weight:700;-webkit-text-stroke:.1px currentColor;">239 972 452</span>
<span class="t" style="left:1340.60px;top:639.00px;font-size:12px;line-height:12px;color:#252b30;transform:scaleX(0.9702);font-weight:700;-webkit-text-stroke:.1px currentColor;">163 247</span>
<span class="t" style="left:1435.50px;top:639.00px;font-size:12px;line-height:12px;color:#252b30;transform:scaleX(0.9580);font-weight:700;-webkit-text-stroke:.1px currentColor;">1 268 %</span>
<span class="t" style="left:20.20px;top:373.70px;font-size:9.5px;line-height:9.5px;color:#f4e272;transform:scaleX(0.9235);font-weight:700;-webkit-text-stroke:.1px currentColor;-webkit-text-stroke:0;">beta</span>
</div>

<!-- red highlight -->
<div class="a" style="left:1190px;top:586px;width:140.4px;height:77px;border:6px solid #b81704;border-radius:5px"></div>
</div>
</body>
</html>
